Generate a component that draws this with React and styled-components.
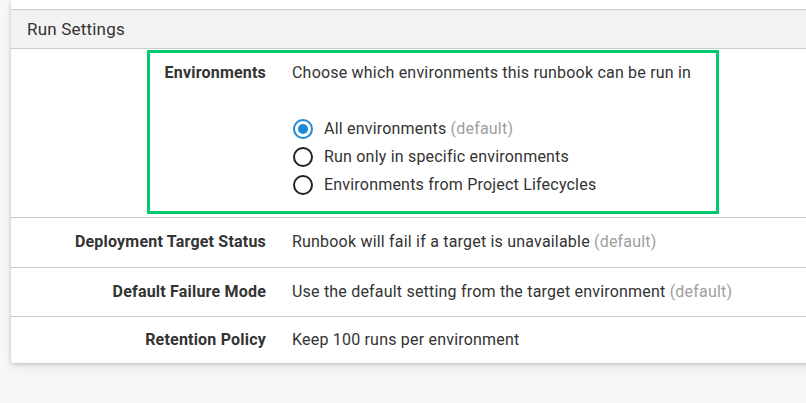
import React from "react";
import styled, { createGlobalStyle } from "styled-components";

const GlobalStyle = createGlobalStyle`
  body {
    margin: 0;
    background: #f8f8f8;
    font-family: Roboto, "Liberation Sans", sans-serif;
    color: #333;
    letter-spacing: 0.2px;
  }
`;

const Page = styled.div`
  padding: 0 0 0 11px;
  height: 403px;
  overflow: hidden;
`;

const Card = styled.div`
  background: #fff;
  margin-right: -20px;
  border-radius: 0 0 3px 3px;
  box-shadow: 0 1px 4px rgba(0, 0, 0, 0.2), 0 6px 14px rgba(0, 0, 0, 0.06);
  padding-top: 9px;
`;

const SectionHeader = styled.div`
  background: #f2f2f2;
  border-top: 1px solid #ccc;
  border-bottom: 1px solid #ccc;
  display: flex;
  align-items: center;
  padding-left: 16px;
  box-sizing: border-box;
  height: 40px;
  font-size: 17px;
  color: #333;
`;

const Row = styled.div`
  display: grid;
  grid-template-columns: 255px 1fr;
  column-gap: 26px;
  align-items: center;
  height: ${(p) => (p.$last ? "46px" : "49.5px")};
  box-sizing: border-box;
  border-bottom: ${(p) => (p.$last ? "none" : "1px solid #ccc")};
`;

const HighlightRow = styled.div`
  padding: 1px 0 3px 136px;
  border-bottom: 1px solid #ccc;
`;

const Highlight = styled.div`
  box-sizing: border-box;
  width: 572px;
  height: 164px;
  border: 3px solid #00c96b;
  display: grid;
  grid-template-columns: 116px 1fr;
  column-gap: 26px;
  align-content: start;
  padding-top: 10px;
`;

const Label = styled.div`
  font-size: 16px;
  font-weight: 700;
  line-height: 20px;
  text-align: right;
  color: #333;
`;

const Value = styled.div`
  font-size: 16px;
  line-height: 20px;
  color: #333;
`;

const Hint = styled.span`
  color: #9e9e9e;
`;

const RadioList = styled.div`
  display: flex;
  flex-direction: column;
  gap: 8px;
  margin-top: 36px;
`;

const RadioRow = styled.label`
  display: flex;
  align-items: center;
  gap: 11px;
  font-size: 16px;
  line-height: 20px;
  color: #333;
`;

const RadioCircle = styled.span`
  width: 20px;
  height: 20px;
  box-sizing: border-box;
  border-radius: 50%;
  border: 2px solid ${(p) => (p.$checked ? "#1a88d6" : "#222")};
  display: flex;
  align-items: center;
  justify-content: center;
  flex-shrink: 0;
  margin-left: 1px;

  &::after {
    content: "";
    display: ${(p) => (p.$checked ? "block" : "none")};
    width: 10px;
    height: 10px;
    border-radius: 50%;
    background: #1a88d6;
  }
`;

const Radio = ({ checked, children }) => (
  <RadioRow>
    <RadioCircle $checked={checked} />
    <span>{children}</span>
  </RadioRow>
);

export default function App() {
  return (
    <>
      <GlobalStyle />
      <Page>
        <Card>
          <SectionHeader>Run Settings</SectionHeader>
          <HighlightRow>
            <Highlight>
              <Label>Environments</Label>
              <Value>
                Choose which environments this runbook can be run in
                <RadioList>
                  <Radio checked>
                    All environments <Hint>(default)</Hint>
                  </Radio>
                  <Radio>Run only in specific environments</Radio>
                  <Radio>Environments from Project Lifecycles</Radio>
                </RadioList>
              </Value>
            </Highlight>
          </HighlightRow>
          <Row>
            <Label>Deployment Target Status</Label>
            <Value>
              Runbook will fail if a target is unavailable <Hint>(default)</Hint>
            </Value>
          </Row>
          <Row>
            <Label>Default Failure Mode</Label>
            <Value>
              Use the default setting from the target environment{" "}
              <Hint>(default)</Hint>
            </Value>
          </Row>
          <Row $last>
            <Label>Retention Policy</Label>
            <Value>Keep 100 runs per environment</Value>
          </Row>
        </Card>
      </Page>
    </>
  );
}
